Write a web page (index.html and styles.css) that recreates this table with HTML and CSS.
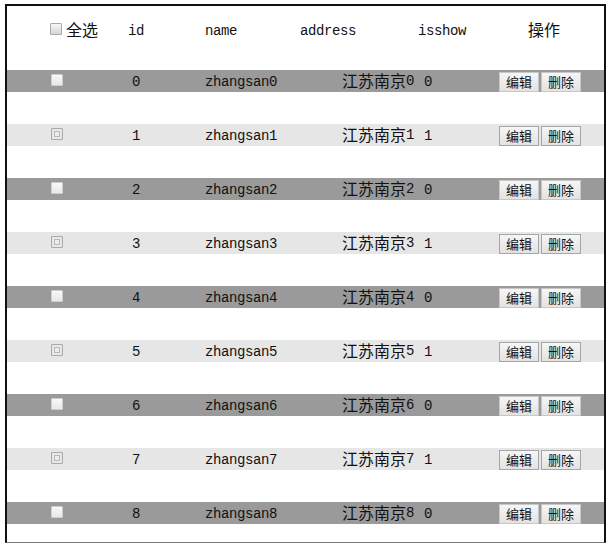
FILE: index.html
```html
<!DOCTYPE html>
<html lang="zh-CN">
<head>
<meta charset="utf-8">
<title>列表</title>
<link rel="stylesheet" href="styles.css">
</head>
<body>
<div class="frame">
  <div class="head">
    <div class="hc"><input type="checkbox" class="cb cb-head"><span class="cjk">全选</span></div>
    <div class="hc lat">id</div>
    <div class="hc lat">name</div>
    <div class="hc lat">address</div>
    <div class="hc lat">isshow</div>
    <div class="hc"><span class="cjk">操作</span></div>
  </div>
  <div class="row dark">
    <div class="cbc"><input type="checkbox" class="cb"></div>
    <div class="c id lat">0</div>
    <div class="c lat">zhangsan0</div>
    <div class="c"><span class="cjk">江苏南京</span><span class="lat">0</span></div>
    <div class="c lat">0</div>
    <div class="ops"><button class="btn">编辑</button><button class="btn">删除</button></div>
  </div>
  <div class="row light">
    <div class="cbc"><input type="checkbox" class="cb"></div>
    <div class="c id lat">1</div>
    <div class="c lat">zhangsan1</div>
    <div class="c"><span class="cjk">江苏南京</span><span class="lat">1</span></div>
    <div class="c lat">1</div>
    <div class="ops"><button class="btn">编辑</button><button class="btn">删除</button></div>
  </div>
  <div class="row dark">
    <div class="cbc"><input type="checkbox" class="cb"></div>
    <div class="c id lat">2</div>
    <div class="c lat">zhangsan2</div>
    <div class="c"><span class="cjk">江苏南京</span><span class="lat">2</span></div>
    <div class="c lat">0</div>
    <div class="ops"><button class="btn">编辑</button><button class="btn">删除</button></div>
  </div>
  <div class="row light">
    <div class="cbc"><input type="checkbox" class="cb"></div>
    <div class="c id lat">3</div>
    <div class="c lat">zhangsan3</div>
    <div class="c"><span class="cjk">江苏南京</span><span class="lat">3</span></div>
    <div class="c lat">1</div>
    <div class="ops"><button class="btn">编辑</button><button class="btn">删除</button></div>
  </div>
  <div class="row dark">
    <div class="cbc"><input type="checkbox" class="cb"></div>
    <div class="c id lat">4</div>
    <div class="c lat">zhangsan4</div>
    <div class="c"><span class="cjk">江苏南京</span><span class="lat">4</span></div>
    <div class="c lat">0</div>
    <div class="ops"><button class="btn">编辑</button><button class="btn">删除</button></div>
  </div>
  <div class="row light">
    <div class="cbc"><input type="checkbox" class="cb"></div>
    <div class="c id lat">5</div>
    <div class="c lat">zhangsan5</div>
    <div class="c"><span class="cjk">江苏南京</span><span class="lat">5</span></div>
    <div class="c lat">1</div>
    <div class="ops"><button class="btn">编辑</button><button class="btn">删除</button></div>
  </div>
  <div class="row dark">
    <div class="cbc"><input type="checkbox" class="cb"></div>
    <div class="c id lat">6</div>
    <div class="c lat">zhangsan6</div>
    <div class="c"><span class="cjk">江苏南京</span><span class="lat">6</span></div>
    <div class="c lat">0</div>
    <div class="ops"><button class="btn">编辑</button><button class="btn">删除</button></div>
  </div>
  <div class="row light">
    <div class="cbc"><input type="checkbox" class="cb"></div>
    <div class="c id lat">7</div>
    <div class="c lat">zhangsan7</div>
    <div class="c"><span class="cjk">江苏南京</span><span class="lat">7</span></div>
    <div class="c lat">1</div>
    <div class="ops"><button class="btn">编辑</button><button class="btn">删除</button></div>
  </div>
  <div class="row dark">
    <div class="cbc"><input type="checkbox" class="cb"></div>
    <div class="c id lat">8</div>
    <div class="c lat">zhangsan8</div>
    <div class="c"><span class="cjk">江苏南京</span><span class="lat">8</span></div>
    <div class="c lat">0</div>
    <div class="ops"><button class="btn">编辑</button><button class="btn">删除</button></div>
  </div>
</div>
</body>
</html>
```
FILE: styles.css
```css
html, body {
  margin: 0;
  padding: 0;
  background: #fff;
}
body {
  font-family: "Liberation Mono", "Noto Sans CJK SC", monospace;
  color: #111;
}
.frame {
  box-sizing: border-box;
  margin: 4px 0 0 5px;
  width: 601px;
  height: 539px;
  border: 2px solid #111;
  border-bottom: 1px solid #777;
  overflow: hidden;
}
.lat {
  font-family: "Liberation Mono", monospace;
  font-size: 14px;
  letter-spacing: -0.4px;
}
.cjk {
  font-family: "Noto Sans CJK SC", "Noto Sans CJK JP", sans-serif;
  font-size: 16px;
  line-height: 0;
}
.head {
  display: grid;
  grid-template-columns: 78px 77px 95px 118px 110px 1fr;
  height: 64px;
  padding-left: 43px;
  box-sizing: border-box;
  padding-top: 12px;
  align-items: start;
}
.hc {
  height: 24px;
  line-height: 24px;
  white-space: nowrap;
  box-sizing: border-box;
}
.hc.lat {
  padding-top: 1px;
}
.hc .cjk {
  vertical-align: -2px;
}
.hc .cb {
  vertical-align: -1px;
}
.row {
  display: grid;
  grid-template-columns: 80px 74px 137px 82px 75px 1fr;
  height: 22px;
  margin-bottom: 32px;
  padding-left: 44px;
  align-items: center;
}
.row.dark { background: #9a9a9a; }
.row.light { background: #e6e6e6; }
.c {
  height: 22px;
  line-height: 22px;
  white-space: nowrap;
  box-sizing: border-box;
}
.c.lat {
  padding-top: 1px;
}
.c .cjk {
  vertical-align: -2px;
}
.c.id { padding-left: 1px; }
.cbc {
  display: flex;
  align-items: center;
  height: 22px;
}
.ops {
  display: flex;
  align-items: center;
  gap: 2px;
  height: 22px;
  padding-top: 1px;
  box-sizing: border-box;
}
.cb {
  -webkit-appearance: none;
  appearance: none;
  margin: 0;
  width: 12px;
  height: 12px;
  box-sizing: border-box;
  border-radius: 1px;
}
.cb-head {
  border: 1px solid #a9a9a9;
  background: linear-gradient(#f6f6f6, #d6d6d6);
  margin-right: 4px;
}
.dark .cb {
  border: 1px solid #cfcfcf;
  background: linear-gradient(#f8f8f8, #e8e8e8);
  margin-top: -2px;
}
.light .cb {
  border: 1px solid #a8a8a8;
  background: #ececec;
  box-shadow: inset 0 0 0 2px #e8e8e8, inset 0 0 0 3px #b8b8b8;
  margin-top: -2px;
}
.btn {
  font-family: "Noto Sans CJK SC", sans-serif;
  font-size: 13px;
  line-height: 18px;
  height: 20px;
  padding: 0 6px;
  margin: 0;
  border: 1px solid #a6a6a6;
  border-radius: 0;
  background: linear-gradient(#f6f6f6, #e2e2e2);
  color: #111;
}
.dark .btn {
  border-color: #c8c8c8;
}
```
